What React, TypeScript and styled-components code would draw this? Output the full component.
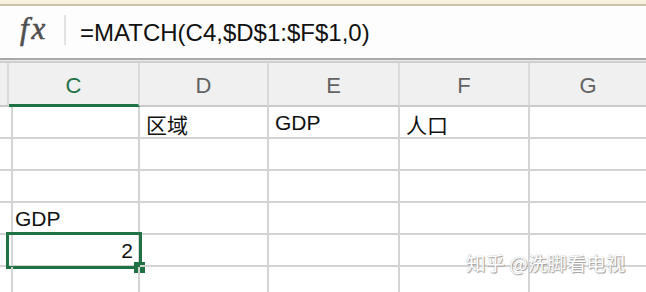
import React from "react";
import styled, { createGlobalStyle } from "styled-components";

const Global = createGlobalStyle`
  html, body { margin: 0; padding: 0; background: #ffffff; }
  body { width: 646px; height: 292px; overflow: hidden; font-family: "Liberation Sans", "Noto Sans CJK SC", sans-serif; }
`;

const Page = styled.div`
  position: relative;
  width: 646px;
  height: 292px;
  overflow: hidden;
  display: flex;
  flex-direction: column;
  background: #fff;
`;

const TopStrip = styled.div`
  height: 4px;
  background: #faf0de;
  border-bottom: 2px solid #cdc1aa;
  flex: none;
`;

const FormulaBar = styled.div`
  height: 52px;
  flex: none;
  display: flex;
  align-items: center;
  background: #fdfdfd;
  border-bottom: 2px solid #a9a9a9;
`;

const Fx = styled.div`
  width: 64px;
  padding-left: 20px;
  box-sizing: border-box;
  font-family: "Liberation Serif", serif;
  font-style: italic;
  font-size: 31px;
  color: #4f4f4f;
  -webkit-text-stroke: 0.6px #4f4f4f;
  margin-top: -7px;
  letter-spacing: 3px;
`;

const Sep = styled.div`
  width: 2px;
  height: 30px;
  background: #e2e2e2;
  margin-top: -4px;
`;

const Formula = styled.div`
  margin-left: 14px;
  font-size: 24px;
  color: #111;
  margin-top: 2px;
`;

const Gap = styled.div`
  height: 1px;
  background: #eaeaea;
  border-bottom: 2px solid #cfcfcf;
  flex: none;
`;

const cols = "9px 131px 129px 131px 130px 1fr";

const HeaderRow = styled.div`
  display: grid;
  grid-template-columns: ${cols};
  height: 44px;
  flex: none;
  background: #f0f0f0;
`;

const HeaderCell = styled.div<{ $active?: boolean }>`
  box-sizing: border-box;
  border-right: 2px solid #dadada;
  border-bottom: ${(p) => (p.$active ? "3px solid #1f7244" : "2px solid #c9c9c9")};
  display: flex;
  align-items: center;
  justify-content: center;
  font-size: 22px;
  color: ${(p) => (p.$active ? "#1f7244" : "#636363")};
  padding-top: 4px;
  &:last-child { border-right: none; }
`;

const Row = styled.div`
  display: grid;
  grid-template-columns: ${cols};
  height: 32px;
  flex: none;
`;

const Cell = styled.div<{ $right?: boolean }>`
  position: relative;
  box-sizing: border-box;
  border-right: 2px solid #d4d4d4;
  border-bottom: 2px solid #d4d4d4;
  display: flex;
  align-items: flex-end;
  justify-content: ${(p) => (p.$right ? "flex-end" : "flex-start")};
  padding: 0 5px 2px 6px;
  font-size: 21px;
  line-height: 24px;
  color: #111;
  white-space: nowrap;
  &:last-child { border-right: none; }
`;

const CjkText = styled.span`
  font-family: "Noto Sans CJK SC", sans-serif;
  font-size: 21px;
  line-height: 24px;
  position: relative;
  top: 1px;
`;

const Selection = styled.div`
  position: absolute;
  left: -3px;
  right: -4px;
  top: -3px;
  bottom: -4px;
  border: 3px solid #1f7244;
  pointer-events: none;
`;

const Handle = styled.div`
  position: absolute;
  right: -6px;
  bottom: -7px;
  width: 11px;
  height: 11px;
  background: #1f7244;
`;

const Watermark = styled.div`
  position: absolute;
  left: 466px;
  top: 248px;
  font-family: "Noto Sans CJK SC", sans-serif;
  font-size: 19.5px;
  color: #ffffff;
  text-shadow: 1px 1px 1px #9a9a9a, 0 0 1px #a0a0a0;
  white-space: nowrap;
`;

type CellData = { text?: string; cjk?: boolean; right?: boolean; selected?: boolean };

const rows: CellData[][] = [
  [{}, {}, { text: "区域", cjk: true }, { text: "GDP" }, { text: "人口", cjk: true }, {}],
  [{}, {}, {}, {}, {}, {}],
  [{}, {}, {}, {}, {}, {}],
  [{}, { text: "GDP" }, {}, {}, {}, {}],
  [{}, { text: "2", right: true, selected: true }, {}, {}, {}, {}],
  [{}, {}, {}, {}, {}, {}],
];

const headers = ["", "C", "D", "E", "F", "G"];

export default function App() {
  return (
    <Page>
      <Global />
      <TopStrip />
      <FormulaBar>
        <Fx>fx</Fx>
        <Sep />
        <Formula>=MATCH(C4,$D$1:$F$1,0)</Formula>
      </FormulaBar>
      <Gap />
      <HeaderRow>
        {headers.map((h, i) => (
          <HeaderCell key={i} $active={h === "C"}>
            {h}
          </HeaderCell>
        ))}
      </HeaderRow>
      {rows.map((r, ri) => (
        <Row key={ri}>
          {r.map((c, ci) => (
            <Cell key={ci} $right={c.right}>
              {c.cjk ? <CjkText>{c.text}</CjkText> : c.text}
              {c.selected && (
                <Selection>
                  <Handle />
                </Selection>
              )}
            </Cell>
          ))}
        </Row>
      ))}
      <Watermark>知乎 @洗脚看电视</Watermark>
    </Page>
  );
}
